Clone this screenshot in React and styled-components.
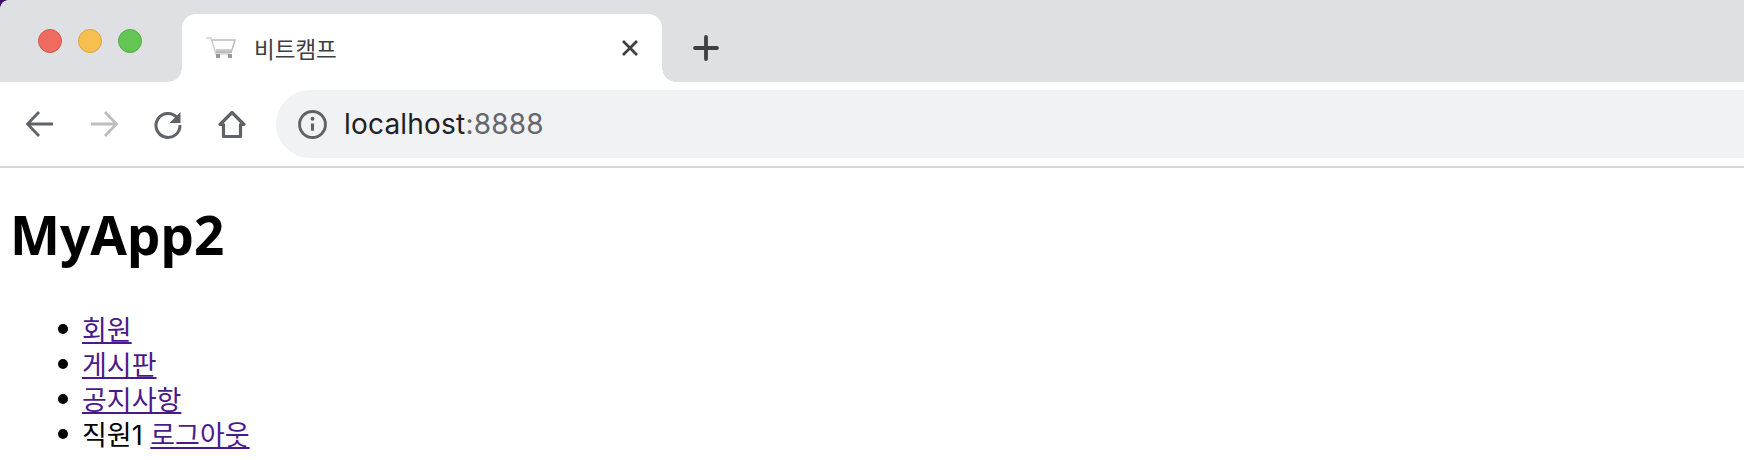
import React from 'react';
import styled, { createGlobalStyle } from 'styled-components';

const Global = createGlobalStyle`
  html, body {
    margin: 0;
    height: 460px;
    overflow: hidden;
    background: #fff;
  }
`;

const TabStrip = styled.div`
  position: relative;
  display: flex;
  align-items: center;
  height: 82px;
  padding-left: 38px;
  background: #dfe0e4;
  &::before {
    content: '';
    position: absolute;
    left: 0;
    top: 0;
    width: 8px;
    height: 8px;
    background: radial-gradient(circle at 8px 8px, #dfe0e4 7.5px, #3a0f6b 8px);
  }
`;
const Lights = styled.div`
  display: flex;
  gap: 16px;
`;
const Light = styled.span`
  width: 24px;
  height: 24px;
  box-sizing: border-box;
  border-radius: 50%;
  background: ${(p) => p.$bg};
  border: 1px solid ${(p) => p.$edge};
`;
const Tab = styled.div`
  position: relative;
  align-self: flex-end;
  display: flex;
  align-items: center;
  box-sizing: border-box;
  width: 480px;
  height: 68px;
  margin-left: 40px;
  padding: 0 23px 0 24px;
  background: #fff;
  border-radius: 14px 14px 0 0;
  &::before, &::after {
    content: '';
    position: absolute;
    bottom: 0;
    width: 14px;
    height: 14px;
  }
  &::before {
    left: -14px;
    background: radial-gradient(circle at 0 0, #dfe0e4 13.5px, #fff 14px);
  }
  &::after {
    right: -14px;
    background: radial-gradient(circle at 100% 0, #dfe0e4 13.5px, #fff 14px);
  }
`;
const Favicon = styled.svg`
  width: 30px;
  height: 22px;
  flex: none;
`;
const TabTitle = styled.span`
  flex: 1;
  margin-left: 18px;
  font: 22.5px 'Noto Sans CJK KR', 'Noto Sans', sans-serif;
  color: #3c4043;
`;
const CloseIcon = styled.svg`
  width: 18px;
  height: 18px;
  flex: none;
`;
const PlusIcon = styled.svg`
  width: 26px;
  height: 26px;
  margin-left: 31px;
  margin-top: 14px;
`;
const Toolbar = styled.div`
  display: flex;
  align-items: center;
  box-sizing: border-box;
  height: 86px;
  padding-left: 8px;
  background: #fff;
  border-bottom: 2px solid #d9d9d9;
`;
const NavButton = styled.span`
  display: flex;
  align-items: center;
  justify-content: center;
  width: 64px;
  height: 64px;
`;
const NavIcon = styled.svg`
  width: 32px;
  height: 32px;
`;
const UrlPill = styled.div`
  flex: 1;
  display: flex;
  align-items: center;
  height: 68px;
  margin-left: 12px;
  padding-left: 22px;
  background: #f1f2f4;
  border-radius: 34px 0 0 34px;
`;
const InfoIcon = styled.svg`
  width: 29px;
  height: 29px;
  flex: none;
`;
const Url = styled.span`
  margin-left: 17px;
  font: 28px Inter, 'Noto Sans', sans-serif;
  letter-spacing: 0.2px;
  color: #202124;
`;
const Port = styled.span`
  color: #646669;
`;
const Page = styled.main`
  padding: 0 10px;
  color: #000;
`;
const Title = styled.h1`
  margin: 34px 0 45px;
  font: 700 53px/66px 'Noto Sans', sans-serif;
`;
const Menu = styled.ul`
  margin: 0;
  padding-left: 72px;
  list-style: none;
  font: 27px/35px Inter, 'Noto Sans CJK KR', sans-serif;
`;
const MenuItem = styled.li`
  position: relative;
  &::before {
    content: '';
    position: absolute;
    left: -24px;
    top: 11px;
    width: 10px;
    height: 10px;
    border-radius: 50%;
    background: #000;
  }
`;
const MenuLink = styled.a`
  display: inline-block;
  color: #4a1a8c;
  text-decoration: underline;
`;

const App = () => (
  <>
    <Global />
    <TabStrip>
      <Lights>
        <Light $bg="#ee6b60" $edge="#d4574c" />
        <Light $bg="#f6bf4f" $edge="#dca43c" />
        <Light $bg="#62c554" $edge="#52ab45" />
      </Lights>
      <Tab>
        <Favicon viewBox="0 0 30 22" fill="none" stroke="#a9a9a9" strokeWidth="1.6">
          <path d="M0 1h5l5 16h14" stroke="#cfcfcf" />
          <path d="M6 3h23l-3 10H10" stroke="#bdbdbd" />
          <path d="M10 15h16" />
          <rect x="10" y="17" width="4" height="4" fill="#999" stroke="none" />
          <rect x="22" y="17" width="4" height="4" fill="#999" stroke="none" />
        </Favicon>
        <TabTitle>비트캠프</TabTitle>
        <CloseIcon viewBox="0 0 18 18" fill="none" stroke="#3c4043" strokeWidth="2.8">
          <path d="M2 2l14 14M16 2L2 16" />
        </CloseIcon>
      </Tab>
      <PlusIcon viewBox="0 0 26 26" fill="none" stroke="#3c4043" strokeWidth="3.8" strokeLinecap="round">
        <path d="M13 2v22M2 13h22" />
      </PlusIcon>
    </TabStrip>
    <Toolbar>
      <NavButton>
        <NavIcon viewBox="0 0 32 32" fill="none" stroke="#5f6368" strokeWidth="2.8">
          <path d="M29 16H5M15 4L3.500 16 15 28" />
        </NavIcon>
      </NavButton>
      <NavButton>
        <NavIcon viewBox="0 0 32 32" fill="none" stroke="#bdbec0" strokeWidth="2.8">
          <path d="M3 16h24M17 4l11.500 12L17 28" />
        </NavIcon>
      </NavButton>
      <NavButton>
        <NavIcon viewBox="0 0 32 32" fill="none">
          <path d="M25 9.500A12 12 0 1 0 28 17" stroke="#5f6368" strokeWidth="3" />
          <path d="M28.500 4v11h-11z" fill="#5f6368" />
        </NavIcon>
      </NavButton>
      <NavButton>
        <NavIcon viewBox="0 0 32 32" fill="none" stroke="#5f6368" strokeWidth="3.2" strokeLinejoin="round">
          <path d="M16 4.500L4 16.500H7.500V28.500h17V16.500h3.500z" />
        </NavIcon>
      </NavButton>
      <UrlPill>
        <InfoIcon viewBox="0 0 28 28" fill="none">
          <circle cx="14" cy="14" r="12.500" stroke="#5f6368" strokeWidth="2.8" />
          <path d="M14 13v7" stroke="#5f6368" strokeWidth="3" />
          <circle cx="14" cy="8.500" r="1.900" fill="#5f6368" />
        </InfoIcon>
        <Url>
          localhost<Port>:8888</Port>
        </Url>
      </UrlPill>
    </Toolbar>
    <Page>
      <Title>MyApp2</Title>
      <Menu>
        <MenuItem><MenuLink href="#">회원</MenuLink></MenuItem>
        <MenuItem><MenuLink href="#">게시판</MenuLink></MenuItem>
        <MenuItem><MenuLink href="#">공지사항</MenuLink></MenuItem>
        <MenuItem>직원1 <MenuLink href="#">로그아웃</MenuLink></MenuItem>
      </Menu>
    </Page>
  </>
);

export default App;
